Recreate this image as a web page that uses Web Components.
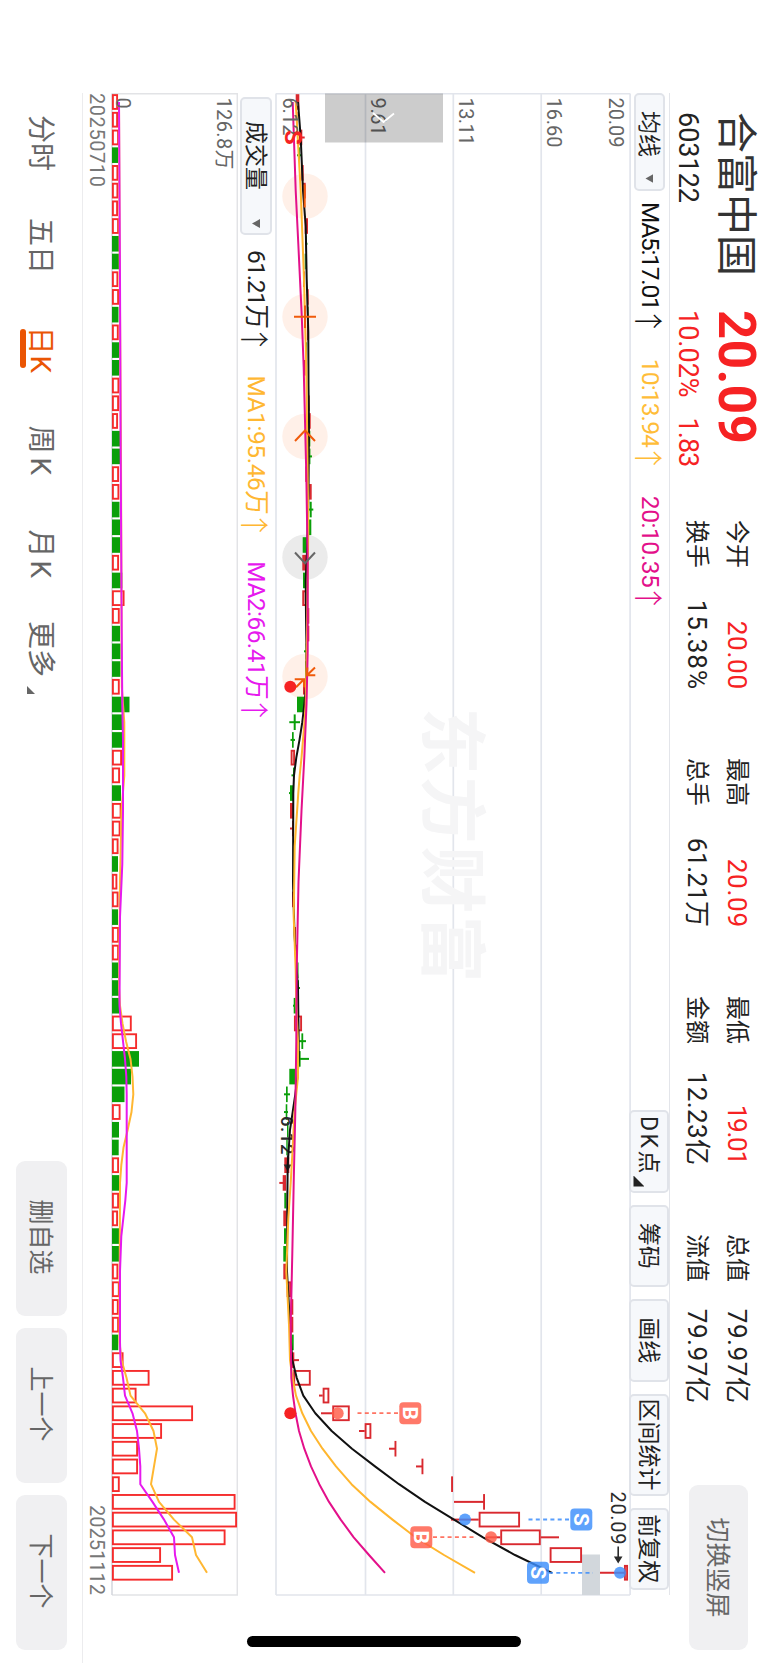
<!DOCTYPE html>
<html lang="zh-CN">
<head>
<meta charset="utf-8">
<title>合富中国 603122</title>
<style>
	html, body { margin: 0; background: #fff; }
	body { font-family: Roboto, "Noto Sans CJK SC", sans-serif; }
</style>
</head>
<body>
<trade-screen></trade-screen>
<script>
/**
 * Single line of text, tracked so that it fills a given width.
 * @attribute [w] width in px
 */
class FitText extends HTMLElement {
	constructor() {
		super();
		this.attachShadow({mode: 'open'});
		this.shadowRoot.innerHTML = `
			<style>
				:host { display: inline-block; white-space: nowrap; line-height: 1; }
			</style>
			<slot></slot>`;
	}

	connectedCallback() {
		const w = parseFloat(this.getAttribute('w'));
		const n = this.textContent.length;
		if (!w || n < 2) return;
		const gap = (w - this.offsetWidth) / (n - 1);
		this.style.letterSpacing = gap.toFixed(3) + 'px';
		this.style.marginRight = (-gap).toFixed(3) + 'px';
	}
}

/**
 * Label on the left, value on the right.
 * @attribute [label]
 * @attribute [value]
 * @attribute [w] width of the value
 * @attribute [up] value in red
 */
class QuoteStat extends HTMLElement {
	constructor() {
		super();
		this.attachShadow({mode: 'open'});
	}

	connectedCallback() {
		this.shadowRoot.innerHTML = `
			<style>
				:host {
					display: flex; justify-content: space-between; align-items: center;
					width: 169px; height: 40px; color: #222; font-size: 26px;
				}
				.label { font-size: 24px; line-height: 1; }
				:host([up]) .value { color: #f62223; }
			</style>
			<span class="label">${this.getAttribute('label')}</span>
			<fit-text class="value" w="${this.getAttribute('w')}">${this.getAttribute('value')}</fit-text>`;
	}
}

/** Stock name, price, stats and the orientation switch */
class QuoteHeader extends HTMLElement {
	constructor() {
		super();
		this.attachShadow({mode: 'open'});
		this.shadowRoot.innerHTML = `
			<style>
				:host { display: flex; height: 98px; box-sizing: border-box; padding: 9px 0 0 19px; }
				.name { width: 198px; }
				.name h1 { margin: 0; padding-top: 2px; font-size: 41px; font-weight: 400; line-height: 42px; color: #333; white-space: nowrap; }
				.row { display: flex; height: 32px; margin-top: 11px; align-items: center; font-size: 27px; color: #222; }
				.price { width: 210px; color: #f62223; }
				.price .big { height: 44px; display: flex; align-items: center; font-size: 51px; font-weight: 700; }
				.price .row { color: #f62223; gap: 20px; }
				.stats { display: grid; grid-template: 40px 40px / repeat(4, 238px); margin-top: 2px; }
				.switch {
					width: 165px; height: 59px; margin: 11px 0 0 13px; border-radius: 9px;
					background: #f0f0f2; color: #666; font-size: 25px; box-sizing: border-box; padding-bottom: 4px;
					display: flex; align-items: center; justify-content: center;
				}
			</style>
			<div class="name">
				<h1><fit-text w="164">合富中国</fit-text></h1>
				<div class="row"><fit-text w="91">603122</fit-text></div>
			</div>
			<div class="price">
				<div class="big"><fit-text w="134">20.09</fit-text></div>
				<div class="row"><fit-text w="88">10.02%</fit-text><fit-text w="50">1.83</fit-text></div>
			</div>
			<div class="stats">
				<quote-stat label="今开" value="20.00" w="68" up></quote-stat>
				<quote-stat label="最高" value="20.09" w="68" up></quote-stat>
				<quote-stat label="最低" value="19.01" w="60" up></quote-stat>
				<quote-stat label="总值" value="79.97亿" w="94"></quote-stat>
				<quote-stat label="换手" value="15.38%" w="89"></quote-stat>
				<quote-stat label="总手" value="61.21万" w="89"></quote-stat>
				<quote-stat label="金额" value="12.23亿" w="93"></quote-stat>
				<quote-stat label="流值" value="79.97亿" w="94"></quote-stat>
			</div>
			<div class="switch">切换竖屏</div>`;
	}
}

/**
 * Bordered tool button.
 * @attribute [drop] small triangle after the text
 * @attribute [corner] small triangle in the lower right corner
 */
class ToolChip extends HTMLElement {
	constructor() {
		super();
		this.attachShadow({mode: 'open'});
		this.shadowRoot.innerHTML = `
			<style>
				:host {
					display: flex; box-sizing: border-box; align-items: center; justify-content: center;
					position: relative; border: 2px solid #e0e3e9; border-radius: 5px;
					background: #f6f8fb; color: #222; font-size: 23px; line-height: 1; white-space: nowrap;
				}
				slot { display: block; padding-top: 1px; }
				i { display: none; width: 9px; height: 8px; background: #666; clip-path: polygon(0 0, 100% 0, 50% 100%); }
				:host([drop]) { justify-content: space-between; }
				:host([drop]) i { display: block; }
				:host([corner]) { justify-content: flex-start; }
				:host([corner]) i {
					display: block; position: absolute; right: 4px; bottom: 2px; width: 11px; height: 11px;
					background: #222; clip-path: polygon(100% 0, 100% 100%, 0 100%);
				}
			</style>
			<slot></slot><i></i>`;
	}
}

/**
 * Indicator reading with a trend arrow.
 * @attribute [w] width of the reading
 */
class MaReading extends HTMLElement {
	constructor() {
		super();
		this.attachShadow({mode: 'open'});
	}

	connectedCallback() {
		this.shadowRoot.innerHTML = `
			<style>
				:host { display: flex; align-items: center; font-size: 24.5px; line-height: 1; }
				.arrow { width: 29px; margin: 0 1px 0 -4px; font-family: "Noto Sans CJK SC", sans-serif; font-size: 29px; font-weight: 300; }
			</style>
			<fit-text w="${this.getAttribute('w')}">${this.textContent}</fit-text><span class="arrow">↑</span>`;
	}
}

class ChartToolbar extends HTMLElement {
	constructor() {
		super();
		this.attachShadow({mode: 'open'});
		this.shadowRoot.innerHTML = `
			<style>
				:host { display: flex; height: 40px; box-sizing: border-box; align-items: center; border-top: 1.5px solid #e3e5ea; }
				.ma { width: 98px; height: 31px; padding: 0 6px 0 16px; margin-right: 11px; }
				ma-reading { margin-right: 22px; }
				.tools { display: flex; gap: 12px; margin-left: auto; margin-right: 5px; }
				.tools tool-chip { width: 82.5px; height: 40px; }
				.tools .wide { width: 102px; }
				.tools .dk { padding-left: 4px; }
			</style>
			<tool-chip class="ma" drop>均线</tool-chip>
			<ma-reading w="109" style="color:#111">MA5:17.01</ma-reading>
			<ma-reading w="89" style="color:#ffbd38">10:13.94</ma-reading>
			<ma-reading w="92" style="color:#e3108a">20:10.35</ma-reading>
			<div class="tools">
				<tool-chip class="dk" corner><fit-text w="58">DK点</fit-text></tool-chip>
				<tool-chip>筹码</tool-chip>
				<tool-chip>画线</tool-chip>
				<tool-chip class="wide">区间统计</tool-chip>
				<tool-chip>前复权</tool-chip>
			</div>`;
	}
}

class VolumeToolbar extends HTMLElement {
	constructor() {
		super();
		this.attachShadow({mode: 'open'});
		this.shadowRoot.innerHTML = `
			<style>
				:host { display: flex; height: 38px; align-items: center; padding-left: 4px; }
				.vol { width: 138px; height: 32px; padding: 0 5px 0 22px; margin-right: 15px; }
				ma-reading { margin-right: 20.5px; padding-top: 1px; }
			</style>
			<tool-chip class="vol" drop>成交量</tool-chip>
			<ma-reading w="79" style="color:#222">61.21万</ma-reading>
			<ma-reading w="139" style="color:#ffb732">MA1:95.46万</ma-reading>
			<ma-reading w="138" style="color:#e619ee">MA2:66.41万</ma-reading>`;
	}
}

const FIRST = 101.5;
const STEP = 17.72;
const cx = i => FIRST + STEP * i;
const RED = '#d9292f';
const GREEN = '#0a9f0a';

/** Points string for [index, height] pairs above a base line */
const points = (pairs, base) => pairs.map(([i, h]) => `${cx(i).toFixed(1)},${(base - h).toFixed(1)}`).join(' ');

// [index, direction, body low, body high, wick low, wick high], heights in px
const CANDLES = [
	[0, 'r', 19.7, 23.3], [1, 'r', 20, 21.5], [2, 'r', 23.3, 26.3, 23, 28.7], [3, 'g', 23, 24, 21, 26],
	[4, 'r', 25.3, 27.7], [5, 'r', 27, 29.7], [6, 'g', 28, 29], [7, 'r', 28.7, 32], [8, 'g', 29.7, 30.7, 29, 31.5],
	[9, 'g', 28.7, 29.7], [10, 'r', 27, 29], [11, 'r', 31, 32.7], [12, 'g', 31, 32.5], [13, 'r', 31, 32.7],
	[14, 'g', 30, 31], [15, 'r', 27, 29.5], [16, 'r', 32, 33], [17, 'r', 32, 33.7], [18, 'r', 32.7, 34.7],
	[19, 'g', 33, 34.3], [20, 'g', 33.4, 34.4, 32, 36], [21, 'r', 29.3, 31], [22, 'r', 33.3, 35.7],
	[23, 'g', 33.7, 35.7, 33, 37.3], [24, 'g', 33, 35.3], [25, 'g', 26.7, 31.3], [26, 'r', 26.3, 30.3],
	[27, 'g', 27, 30.7], [28, 'h', 26.3, 30.5], [29, 'r', 31.3, 33.3], [30, 'r', 31.3, 33.3], [31, 'g', 29.7, 30.5, 28, 31],
	[32, 'g', 29, 30.7], [33, 'r', 27, 29.3], [34, 'g', 21, 28.7], [35, 'g', 17.7, 19.7, 13.3, 24],
	[36, 'g', 16, 17.7, 14.5, 19], [37, 'h', 14.7, 19], [38, 'g', 17, 18, 15.5, 19], [39, 'g', 14, 17.7, 13, 18],
	[40, 'r', 14, 17], [41, 'r', 16, 17.2, 14, 18], [42, 'r', 17, 18], [43, 'g', 17, 18], [44, 'r', 16.5, 18],
	[45, 'r', 16, 19], [46, 'g', 18, 19], [47, 'r', 19, 20], [48, 'r', 20, 21], [49, 'g', 21.5, 22.5],
	[50, 'g', 22, 23, 20, 24], [51, 'g', 17.7, 20, 17, 20], [52, 'h', 18, 26], [53, 'g', 25.4, 27.2, 23.3, 30],
	[54, 'g', 23, 24.6, 23, 33], [55, 'g', 13.3, 19.3], [56, 'g', 10, 11.7, 8, 14], [57, 'g', 9.7, 11.3, 8, 12],
	[58, 'g', 11, 12.5], [59, 'g', 10.3, 11.7], [60, 'r', 8.3, 13.3], [61, 'r', 6.7, 10, 3.3, 10],
	[62, 'g', 8.3, 10.3], [63, 'r', 7.3, 10.7], [64, 'g', 8, 10.3], [65, 'g', 7.3, 10], [66, 'r', 7.3, 11],
	[67, 'h', 10.7, 15], [68, 'r', 14.7, 17.3], [69, 'r', 14.7, 17.3], [70, 'g', 16, 17.7], [71, 'r', 16, 18.3, 16, 23],
	[72, 'h', 17.3, 34.7], [73, 'h', 46.7, 53.3, 43, 46.7], [74, 'h', 56.3, 73.7, 45, 56.3], [75, 'h', 88.7, 95.3, 83, 88.7],
	[76, 'r', 118.5, 120.4, 113, 119], [77, 'r', 145.5, 147.4, 140, 146], [78, 'r', 175.1, 177],
	[79, 'r', 207.1, 209, 178, 208], [80, 'h', 202.7, 244, 175, 202.7], [81, 'h', 224.3, 264.7, 210, 224.3, 264.7, 283],
	[82, 'h', 273.7, 306], [83, 'h', 348, 352, 324, 348]
];

const MA5 = [[0, 22], [2, 24.7], [5, 27], [7, 29.7], [10, 30.7], [13, 32.3], [16, 32.5], [18, 33], [22, 32.5], [25, 31.3],
	[27, 29.7], [29, 30], [31, 30.5], [33, 30], [34, 28.3], [35, 26.3], [36, 23.5], [37, 20.3], [38, 18], [39, 17.3], [44, 17],
	[47, 18.5], [50, 22], [53, 22.7], [54, 22.7], [55, 21.5], [56, 19.3], [57, 16.7], [58, 14], [60, 11.7], [62, 11.3],
	[66, 11], [68, 13], [70, 15], [71, 16.3], [72, 20.7], [73, 27.3], [74, 39.3], [75, 55.7], [76, 76], [77, 99], [78, 123],
	[79, 149], [80, 178], [81, 207], [82, 239], [83, 276]];
const MA10 = [[0, 19.7], [5, 24.7], [10, 28], [15, 30.3], [18, 31], [24, 32.3], [27, 31.7], [30, 31], [33, 30], [34, 29.7],
	[35, 28.5], [36, 27], [37, 25.5], [38, 23.7], [39, 22.3], [42, 18.7], [46, 17.7], [49, 19.7], [51, 20.3], [53, 22],
	[55, 22], [57, 18.5], [59, 16.7], [61, 14.7], [63, 12.3], [66, 10.3], [69, 13], [71, 14], [72, 16.5], [73, 20], [74, 26.3],
	[75, 35], [76, 46.5], [77, 60], [78, 75.5], [79, 94.5], [80, 116.5], [81, 139.5], [82, 168], [83, 199]];
const MA20 = [[0, 16.7], [5, 19.7], [8, 22.3], [12, 25.7], [15, 27.7], [21, 30.3], [26, 31.7], [31, 31.7], [34, 30.5],
	[37, 28.3], [40, 25.5], [44, 22.5], [49, 20.7], [53, 20.3], [57, 19.3], [61, 17.7], [65, 16.3], [69, 14.7], [72, 15.3],
	[73, 17], [74, 19.5], [75, 23], [76, 28.3], [77, 35], [78, 43.3], [79, 53], [80, 64.7], [81, 77.7], [82, 93], [83, 109]];

/** Candles, moving averages, trade marks and the zoom controls */
class KlineChart extends HTMLElement {
	static BASE = 492;

	constructor() {
		super();
		this.attachShadow({mode: 'open'});
		this.shadowRoot.innerHTML = `
			<style>
				:host { display: block; height: 356px; }
				svg { display: block; font-family: inherit; }
				.axis { font-size: 20px; fill: #666; }
				.grid { stroke: #e2e5ec; stroke-width: 1.7; }
				.tag { font-size: 21px; font-weight: 700; fill: #fff; text-anchor: middle; }
				.ma { fill: none; stroke-width: 2; stroke-linejoin: round; }
				.ctl { fill: none; stroke: #f05a0a; stroke-width: 2; }
			</style>
			<svg width="1503" height="356" viewBox="92.5 137 1503 356">
				${this.grid()}
				<text x="707" y="340" font-size="67" font-weight="700" fill="#f5f5f6" textLength="275">东方财富</text>
				<rect x="1554" y="168" width="40.5" height="18" fill="#d2d7dc"/>
				${this.discs()}
				${CANDLES.map(c => this.candle(c)).join('')}
				<g fill="#2b2b2b">
					<text x="1491" y="157" font-size="20" textLength="53">20.09</text>
					<path d="M1546 149h10v-3.500l7 4.300-7 4.300v-3.500h-10z"/>
					<text x="1115.5" y="487.500" font-size="18.500" font-weight="500" textLength="38.500">6.12</text>
					<path d="M1155 479.500h9v-3l7 3.900-7 3.900v-3.200h-9z"/>
				</g>
				<polyline class="ma" stroke="#111" points="${points(MA5, KlineChart.BASE)}"/>
				<polyline class="ma" stroke="#ffb62e" points="${points(MA10, KlineChart.BASE)}"/>
				<polyline class="ma" stroke="#e3108a" points="${points(MA20, KlineChart.BASE)}"/>
				${this.controls()}
				<circle cx="686.300" cy="477.700" r="6" fill="#f62223"/>
				<circle cx="1412.700" cy="477.700" r="6" fill="#f62223"/>
				${this.axis()}
				<text x="137" y="483" font-size="24" font-weight="700" fill="#f62223" text-anchor="middle">S</text>
				${this.mark('B', 1412.7, 357.7, 430.3, 370, 411)}
				${this.mark('S', 1519, 186.7, 303, 199, 240)}
				${this.mark('B', 1536.7, 346.7, 277, 335, 293)}
				${this.mark('S', 1572.3, 230, 148, 219, 175)}
				<rect x="93" y="325" width="49" height="118" fill="#000" fill-opacity=".2"/>
				<path d="M112.500 395l9 -10.500 -8.500 -10.500" fill="none" stroke="#fff" stroke-width="1.800"/>
			</svg>`;
	}

	grid() {
		const rows = [137.9, 226.8, 314.7, 402.5, 492];
		return rows.map(y => `<path class="grid" d="M93 ${y}H1594.500"/>`).join('') +
			'<path class="grid" d="M93.200 138V492M1594.500 138V492"/>';
	}

	axis() {
		const labels = [['20.09', 159, 50], ['16.60', 221, 50], ['13.11', 309, 48], ['9.61', 397.5, 38], ['6.12', 485, 38]];
		return labels.map(([t, y, w]) => `<text class="axis" x="97" y="${y}" textLength="${w}">${t}</text>`).join('');
	}

	candle([i, kind, lo, hi, ...wicks]) {
		const b = KlineChart.BASE;
		const x = cx(i);
		const color = kind === 'g' ? GREEN : RED;
		let out = '';
		for (let n = 0; n < wicks.length; n += 2) {
			out += `<path d="M${x} ${b - wicks[n]}V${b - wicks[n + 1]}" stroke="${color}" stroke-width="2"/>`;
		}
		if (kind === 'h') {
			out += `<rect x="${x - 6.9}" y="${b - hi + .9}" width="13.800" height="${hi - lo - 1.8}" fill="#fff" stroke="${color}" stroke-width="1.900"/>`;
		} else {
			out += `<rect x="${x - 7.8}" y="${b - hi}" width="15.600" height="${hi - lo}" fill="${color}"/>`;
		}
		return out;
	}

	discs() {
		return [195.7, 316.3, 436, 556.7, 676].map((x, n) =>
			`<circle cx="${x}" cy="463" r="22.700" fill="${n === 3 ? '#ebebeb' : '#fff0e8'}"/>`).join('');
	}

	// minus, plus, back, forward, collapse
	controls() {
		return `
			<path class="ctl" d="M184 463.300h23M305 463h22.500M316.300 452v22"/>
			<path class="ctl" d="M440.500 473l-10.500-10 10.500-10"/>
			<path class="ctl" style="stroke:#666" d="M552 473l10.700-10 -10.700-10"/>
			<path class="ctl" d="M674.700 452.700V461L667 460.700M674.700 461L667 453M678.700 473.300V464L686.700 464M678.700 464L686.700 472"/>`;
	}

	/** Trade mark: a tag joined to the candle by a dotted line */
	mark(letter, x, tagY, dotY, from, to) {
		const color = letter === 'B' ? '#ff5c48' : '#3c8dfb';
		return `
			<g fill="${color}" fill-opacity=".82">
				<path d="M${x} ${from}V${to}" stroke="${color}" stroke-opacity=".85" stroke-width="1.800" stroke-dasharray="4 3.300"/>
				<circle cx="${x}" cy="${dotY}" r="6"/>
				<rect x="${x - 11}" y="${tagY - 11}" width="22" height="22" rx="4"/>
			</g>
			<text class="tag" x="${x}" y="${tagY + 7.5}">${letter}</text>`;
	}
}

// one entry per day: r rise, g fall, then the bar height in px
const VOLUMES = `r6 r6 r7 g6 r6.3 r6.3 r6 r7 g7 g7 r6.3 r7 g6.5 r6.7 g7.3 g7.3 r7.3 r7 r6 g8 g8 r7 r7.3 g7.5 g8 g8.3
	r7 g10.3 r12.5 r7.7 g8 g8.5 g8.5 r7.7 g17.5 g11.5 g11 r10 r8 g9 r9.5 r8.5 r6.5 g6 r5.3 r6.5 g6 r7 r7 g6.5 g7 g7.5
	r19.7 r25 g27 g19 g12.5 r8.5 g7 g6.7 r7 g7.3 r7 r6 g7 g7 r6.3 r7.7 r6.7 r7 g6.3 r11.5 r37.5 r24.5 r81 r50 r26 r26
	r7.7 r123.5 r125 r113.5 r49 r61`.split(/\s+/);
const VMA1 = [[0, 7], [10, 7.8], [20, 9], [33, 9.8], [34, 11], [35, 12.3], [38, 12.3], [40, 9.5], [44, 8], [50, 7], [51, 8], [52, 10.5],
	[53, 14], [54, 18.5], [55, 20.5], [56, 21.3], [57, 19.5], [58, 15.7], [59, 11.5], [60, 9.3], [61, 8], [70, 7.5], [71, 9.5],
	[72, 14.5], [73, 18.5], [74, 33], [75, 41.5], [76, 45], [77, 42], [78, 39], [79, 47], [80, 62], [81, 80], [82, 84], [83, 95]];
const VMA2 = [[0, 7], [10, 8], [20, 8.7], [30, 9.7], [34, 10.3], [36, 11], [40, 11], [43, 10.3], [46, 8], [51, 7.5], [52, 9],
	[53, 11], [54, 13], [55, 14.3], [56, 14.7], [61, 14.7], [62, 13.3], [64, 9.3], [66, 8], [70, 8], [71, 8.5], [72, 11], [73, 13],
	[74, 20.5], [75, 25], [76, 27], [77, 28.3], [78, 28.3], [79, 40.5], [80, 52], [81, 62], [82, 63], [83, 67]];

/** Volume bars with two averages */
class VolumeChart extends HTMLElement {
	static BASE = 656;

	constructor() {
		super();
		this.attachShadow({mode: 'open'});
		this.shadowRoot.innerHTML = `
			<style>
				:host { display: block; height: 127px; }
				svg { display: block; font-family: inherit; }
				.axis { font-size: 20px; fill: #666; }
				.ma { fill: none; stroke-width: 2; stroke-linejoin: round; }
			</style>
			<svg width="1503" height="127" viewBox="92.500 530 1503 127">
				<path d="M93.200 656V530.700H1594.500V656" fill="none" stroke="#e2e3e6" stroke-width="1.500"/>
				<path d="M93 656H1594.500" stroke="#d3d6dd" stroke-width="1.500"/>
				${VOLUMES.map((v, i) => this.bar(v, i)).join('')}
				<polyline class="ma" stroke="#ffb732" points="${points(VMA1, VolumeChart.BASE)}"/>
				<polyline class="ma" stroke="#e619ee" points="${points(VMA2, VolumeChart.BASE)}"/>
				<text class="axis" x="97" y="551" textLength="72">126.8万</text>
				<text class="axis" x="97" y="652">0</text>
			</svg>`;
	}

	bar(v, i) {
		const h = parseFloat(v.slice(1));
		const x = cx(i);
		const y = VolumeChart.BASE - h;
		return v[0] === 'g'
			? `<rect x="${x - 7.8}" y="${y}" width="15.600" height="${h}" fill="${GREEN}"/>`
			: `<rect x="${x - 6.9}" y="${y + .9}" width="13.800" height="${h - 1.8}" fill="#fff" stroke="#f52c2c" stroke-width="1.900"/>`;
	}
}

/** Period tabs and the watchlist buttons */
class PeriodBar extends HTMLElement {
	constructor() {
		super();
		this.attachShadow({mode: 'open'});
		this.shadowRoot.innerHTML = `
			<style>
				:host { display: flex; height: 83px; padding-left: 22px; color: #666; border-top: 1.5px solid #ececee; box-sizing: border-box; }
				nav {
					display: grid; grid-template-columns: 103px 108.5px 99px 104px 91.5px auto; align-items: start;
					padding-top: 28px; font-size: 28px; line-height: 28px; white-space: nowrap;
				}
				nav span { position: relative; }
				.on { color: #ea5504; }
				.on::after {
					content: ""; position: absolute; left: 2px; top: 28px; width: 39px; height: 6px;
					border-radius: 3px; background: #ea5504;
				}
				.more::after {
					content: ""; position: absolute; right: -17px; bottom: 1px; width: 8px; height: 8px;
					background: #666; clip-path: polygon(100% 0, 100% 100%, 0 100%);
				}
				.buttons { display: flex; gap: 12px; margin: 15px 13.5px 0 auto; }
				.buttons div {
					width: 155px; height: 51px; border-radius: 9px; background: #f0f0f2; font-size: 25px;
					box-sizing: border-box; padding: 0 2px 4px 0;
					display: flex; align-items: center; justify-content: center;
				}
			</style>
			<nav>
				<span>分时</span><span>五日</span><span class="on"><fit-text w="47">日K</fit-text></span>
				<span><fit-text w="50">周K</fit-text></span><span><fit-text w="49">月K</fit-text></span><span class="more">更多</span>
			</nav>
			<div class="buttons"><div>删自选</div><div>上一个</div><div>下一个</div></div>`;
	}
}

/** Landscape screen, turned a quarter to the right */
class TradeScreen extends HTMLElement {
	constructor() {
		super();
		this.attachShadow({mode: 'open'});
		this.shadowRoot.innerHTML = `
			<style>
				:host { display: block; width: 768px; height: 1663px; overflow: hidden; background: #fff; }
				.stage {
					display: flex; flex-direction: column; position: relative; box-sizing: border-box;
					width: 1663px; height: 768px; padding-left: 93px;
					transform: translateX(768px) rotate(90deg); transform-origin: 0 0;
				}
				chart-toolbar { width: 1502px; flex: none; }
				kline-chart { margin: -1px 0 0 -.5px; flex: none; }
				volume-toolbar { flex: none; }
				volume-chart { margin: -1px 0 0 -.5px; flex: none; }
				.dates { display: flex; justify-content: space-between; align-items: center; width: 1502px; height: 28px; flex: none; font-size: 20px; color: #777; }
				.home { position: absolute; left: 1636px; top: 247px; width: 11px; height: 274px; border-radius: 6px; background: #000; }
			</style>
			<div class="stage">
				<quote-header></quote-header>
				<chart-toolbar></chart-toolbar>
				<kline-chart></kline-chart>
				<volume-toolbar></volume-toolbar>
				<volume-chart></volume-chart>
				<div class="dates"><fit-text w="94">20250710</fit-text><fit-text w="90">20251112</fit-text></div>
				<period-bar></period-bar>
				<div class="home"></div>
			</div>`;
	}
}

customElements.define('fit-text', FitText);
customElements.define('quote-stat', QuoteStat);
customElements.define('quote-header', QuoteHeader);
customElements.define('tool-chip', ToolChip);
customElements.define('ma-reading', MaReading);
customElements.define('chart-toolbar', ChartToolbar);
customElements.define('volume-toolbar', VolumeToolbar);
customElements.define('kline-chart', KlineChart);
customElements.define('volume-chart', VolumeChart);
customElements.define('period-bar', PeriodBar);
customElements.define('trade-screen', TradeScreen);
</script>
</body>
</html>
